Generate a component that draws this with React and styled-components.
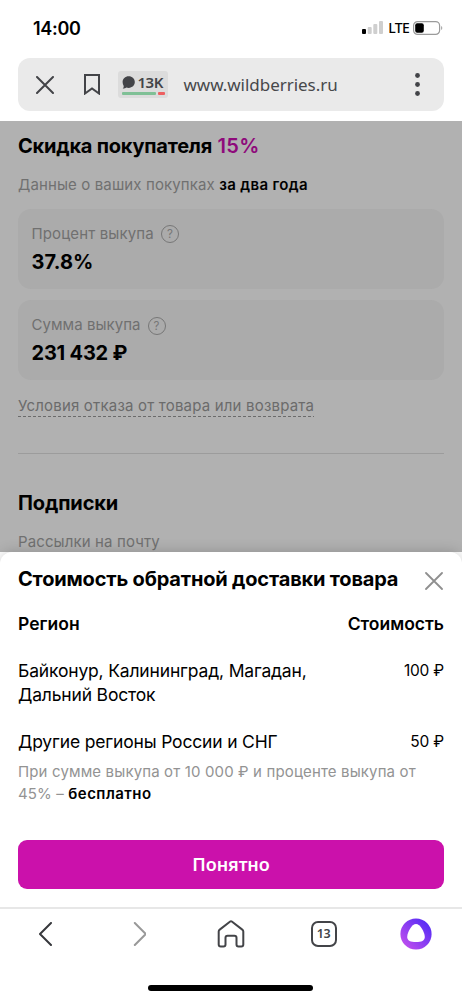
import React from 'react';
import styled, { createGlobalStyle, css } from 'styled-components';

const GlobalStyle = createGlobalStyle`
  * {
    box-sizing: border-box;
  }

  body {
    margin: 0;
    background: #fff;
    color: #000;
    font-family: 'Inter', sans-serif;
  }

  h2, p {
    margin: 0;
  }

  button {
    padding: 0;
    border: none;
    background: none;
    font: inherit;
    cursor: pointer;
  }

  svg {
    display: block;
  }
`;

const Screen = styled.div`
  display: flex;
  flex-direction: column;
  width: 462px;
  height: 1000px;
  overflow: hidden;
`;

const StatusBar = styled.header`
  display: flex;
  align-items: center;
  justify-content: space-between;
  flex: 0 0 58px;
  padding: 0 19px 2px 33px;
`;

const Clock = styled.time`
  font-size: 18px;
  font-weight: 600;
  letter-spacing: -0.3px;
`;

const StatusIcons = styled.div`
  display: flex;
  align-items: center;
  gap: 5px;
  margin-bottom: 1px;
`;

const Network = styled.span`
  margin-right: -1px;
  font: 500 14px/16px 'Noto Sans', sans-serif;
  letter-spacing: -0.7px;
`;

const AddressBar = styled.div`
  display: flex;
  align-items: center;
  flex: 0 0 53px;
  margin: 0 18px 9.5px;
  padding: 0 24px 0 17.5px;
  border-radius: 12px;
  background: #eaeaea;
`;

const Reviews = styled.div`
  display: flex;
  flex-direction: column;
  gap: 1px;
  width: 50px;
  height: 27px;
  margin: 0 16px 0 18px;
  padding: 3px 3px 0 4px;
  border-radius: 3px;
  background: #dcdcdc;
`;

const ReviewsCount = styled.div`
  display: flex;
  align-items: center;
  gap: 3px;
  height: 17px;
  color: #434448;
  font: 600 15px/17px 'Noto Sans', sans-serif;
  letter-spacing: -0.5px;
`;

const Rating = styled.div`
  display: flex;
  gap: 2px;
`;

const RatingPart = styled.i`
  height: 3px;
  border-radius: 1px;
  flex: ${(props) => props.$share} 0 0;
  background: ${(props) => (props.$good ? '#7fc096' : '#ed5f60')};
`;

const Url = styled.span`
  flex: 1;
  padding-top: 1px;
  color: #47484b;
  font: 400 17px/24px 'Noto Sans', sans-serif;
  letter-spacing: -0.04px;
`;

const Page = styled.main`
  flex: 0 0 431.5px;
  padding: 13.5px 18px 0;
  overflow: hidden;
  background: #b1b1b1;
`;

const Title = styled.h2`
  font-size: 20px;
  font-weight: 700;
  line-height: 24px;
  letter-spacing: ${(props) => props.$spacing || 0}px;
`;

const Accent = styled.span`
  margin-left: 0.8px;
  color: #8e0a7b;
  font-weight: 600;
  letter-spacing: 0.4px;
`;

const Text = styled.p`
  color: #707070;
  font-size: 15px;
  line-height: 22px;
  letter-spacing: ${(props) => props.$spacing || 0.14}px;
  white-space: nowrap;

  b {
    color: #000;
    font-weight: 600;
    letter-spacing: 0.36px;
  }
`;

const Caption = styled(Text)`
  margin-top: 15.5px;
  letter-spacing: 0.12px;
`;

const Cards = styled.div`
  display: flex;
  flex-direction: column;
  gap: 11.5px;
  margin: 13px 0 14.5px;
`;

const Card = styled.section`
  height: 80px;
  padding: 14px 13.5px 0;
  border-radius: 13px;
  background: #ababab;
`;

const CardLabel = styled.div`
  display: flex;
  align-items: center;
  gap: 7px;
  margin-bottom: 5px;
`;

const Hint = styled.span`
  width: 18px;
  height: 18px;
  margin-top: 1px;
  border: 1px solid #777;
  border-radius: 50%;
  color: #777;
  font-size: 11.5px;
  line-height: 16px;
  text-align: center;
`;

const TermsLink = styled(Text)`
  width: 296px;
  height: 22.5px;
  color: #6b6b6b;
  letter-spacing: 0.19px;
  background: repeating-linear-gradient(90deg, #6b6b6b 0 3px, transparent 3px 5px) bottom / 100% 1px no-repeat;
`;

const Divider = styled.div`
  height: 1px;
  margin: 36px 0 37px;
  background: #9c9c9c;
`;

const Sheet = styled.section`
  position: relative;
  display: flex;
  flex-direction: column;
  flex: 1;
  padding: 15px 18px 0;
  border-radius: 12px 12px 0 0;
  background: #fff;
  box-shadow: 0 0 14px rgba(0, 0, 0, 0.2);
`;

const SheetHead = styled.div`
  display: flex;
  justify-content: space-between;

  button {
    align-self: flex-end;
    margin: 0 1px 1px 0;
  }
`;

const Row = styled.div`
  display: flex;
  justify-content: space-between;
  margin-top: 23px;
  font-size: 17.5px;
  line-height: 24px;

  ${(props) =>
    props.$head &&
    css`
      margin-top: 21px;
      font-weight: 600;
    `}
`;

const Region = styled.span`
  width: 310px;
  letter-spacing: -0.17px;
`;

const Price = styled.span`
  font-size: 15.5px;
  letter-spacing: -0.2px;
`;

const Note = styled(Text)`
  margin-top: 7px;
  color: #939393;

  b {
    letter-spacing: 0.45px;
  }
`;

const Confirm = styled.button`
  height: 49px;
  margin-top: 35px;
  border-radius: 9px;
  background: #cb11ab;
  color: #fff;
  font: 600 18px/49px 'Noto Sans', sans-serif;
  letter-spacing: -0.1px;
`;

const BottomNav = styled.nav`
  position: relative;
  display: flex;
  justify-content: space-between;
  flex: 0 0 93px;
  padding: 9px 30px 0;
  border-top: 2px solid #e7e7e7;
  background: #fff;
`;

const NavButton = styled.button`
  display: flex;
  align-items: center;
  justify-content: center;
  width: 32px;
  height: 32px;
`;

const Tabs = styled.span`
  width: 26px;
  height: 26px;
  border: 2px solid #434448;
  border-radius: 7px;
  color: #434448;
  font: 600 12.5px/22px 'Noto Sans', sans-serif;
  letter-spacing: -0.3px;
  text-align: center;
`;

const HomeIndicator = styled.div`
  position: absolute;
  left: 148px;
  bottom: 9px;
  width: 165px;
  height: 6px;
  border-radius: 3px;
  background: #000;
`;

const Bookmark = styled.svg`
  margin-left: 30px;
`;

const Signal = () => (
  <svg width="21" height="13" viewBox="0 0 21 13">
    <rect x="0" y="8" width="4" height="5" rx="1" fill="#000" />
    <rect x="5.7" y="6" width="4" height="7" rx="1" fill="#cfcfcf" />
    <rect x="11.3" y="3" width="4" height="10" rx="1" fill="#cfcfcf" />
    <rect x="17" y="0" width="4" height="13" rx="1" fill="#cfcfcf" />
  </svg>
);

const Battery = () => (
  <svg width="30" height="14" viewBox="0 0 30 14">
    <rect x="0.6" y="0.6" width="26" height="12.8" rx="4" fill="none" stroke="#9b9b9b" strokeWidth="1.2" />
    <rect x="2.2" y="2.2" width="8.6" height="9.6" rx="2" fill="#000" />
    <path d="M28.2 5v4c1.4-.5 1.4-3.5 0-4z" fill="#9b9b9b" />
  </svg>
);

const Close = ({ color = '#434448', size = 18, width = 2 }) => (
  <svg width={size} height={size} viewBox="0 0 18 18" stroke={color} strokeWidth={width} strokeLinecap="round">
    <path d="M1 1l16 16M17 1L1 17" />
  </svg>
);

const Chevron = ({ right }) => (
  <svg
    width="14"
    height="24"
    viewBox="0 0 14 24"
    fill="none"
    stroke={right ? '#999' : '#37383c'}
    strokeWidth="2"
    strokeLinecap="round"
    strokeLinejoin="round"
  >
    <path d={right ? 'M2.8 1l11 11-11 11' : 'M12 1l-11 11 11 11'} />
  </svg>
);

const Home = () => (
  <svg width="28" height="28" viewBox="0 0 28 28" fill="none" stroke="#434448" strokeWidth="2" strokeLinejoin="round">
    <path d="M1.7 11.500c0-.9.3-1.400 1-1.900L13.200 1.500c.6-.4 1-.4 1.600 0l10.500 8.100c.7.500 1 1 1 1.900v13c0 1.400-.6 2-2 2h-2.800c-1.400 0-2-.6-2-2v-6.700c0-1.400-.7-2.100-2.100-2.100h-6.800c-1.400 0-2.100.7-2.100 2.100v6.700c0 1.400-.6 2-2 2H3.700c-1.400 0-2-.6-2-2z" />
  </svg>
);

const Alice = () => (
  <svg width="32" height="32" viewBox="0 0 32 32">
    <defs>
      <linearGradient id="alice" x1="0" y1="1" x2="1" y2="0">
        <stop offset="0.1" stopColor="#c04fee" />
        <stop offset="0.85" stopColor="#5a2df5" />
      </linearGradient>
    </defs>
    <circle cx="16" cy="16" r="15.6" fill="url(#alice)" />
    <path
      d="M16 6c4.100 0 8.800 8.200 8.800 13 0 3.700-3.300 5-8.800 5s-8.800-1.300-8.800-5c0-4.800 4.700-13 8.800-13z"
      fill="#fff"
    />
  </svg>
);

const cards = [
  { label: 'Процент выкупа', value: '37.8%', spacing: 0.1 },
  { label: 'Сумма выкупа', value: '231 432 ₽', labelSpacing: 0.05, spacing: -0.2 },
];

export default function App() {
  return (
    <Screen>
      <GlobalStyle />
      <StatusBar>
        <Clock>14:00</Clock>
        <StatusIcons>
          <Signal />
          <Network>LTE</Network>
          <Battery />
        </StatusIcons>
      </StatusBar>

      <AddressBar>
        <Close />
        <Bookmark width="16" height="21" viewBox="0 0 16 21" fill="none" stroke="#434448" strokeWidth="2">
          <path d="M1 1h14v18.5l-7-5-7 5z" />
        </Bookmark>
        <Reviews>
          <ReviewsCount>
            <svg width="13" height="13" viewBox="0 0 13 13" fill="#434448">
              <path d="M6.700.3c3.500 0 6.100 2.500 6.100 5.800s-2.600 5.800-6.100 5.800c-.9 0-1.700-.1-2.400-.4-.9.700-2.200 1.200-3.600 1.100.8-.9 1-1.700 1-2.700C1 8.900.6 7.600.6 6.100.6 2.800 3.200.3 6.700.3z" />
            </svg>
            13K
          </ReviewsCount>
          <Rating>
            <RatingPart $good $share={34} />
            <RatingPart $share={7} />
          </Rating>
        </Reviews>
        <Url>www.wildberries.ru</Url>
        <svg width="5" height="23" viewBox="0 0 5 23" fill="#434448">
          <circle cx="2.5" cy="2.5" r="2.4" />
          <circle cx="2.5" cy="11.5" r="2.4" />
          <circle cx="2.5" cy="20.5" r="2.4" />
        </svg>
      </AddressBar>

      <Page>
        <Title $spacing={-0.22}>
          Скидка покупателя <Accent>15%</Accent>
        </Title>
        <Caption>
          Данные о ваших покупках <b>за два года</b>
        </Caption>
        <Cards>
          {cards.map((card) => (
            <Card key={card.label}>
              <CardLabel>
                <Text $spacing={card.labelSpacing}>{card.label}</Text>
                <Hint>?</Hint>
              </CardLabel>
              <Title $spacing={card.spacing}>{card.value}</Title>
            </Card>
          ))}
        </Cards>
        <TermsLink>Условия отказа от товара или возврата</TermsLink>
        <Divider />
        <Title $spacing={-0.12}>Подписки</Title>
        <Caption>Рассылки на почту</Caption>
      </Page>

      <Sheet>
        <SheetHead>
          <Title $spacing={-0.18}>Стоимость обратной доставки товара</Title>
          <button aria-label="Закрыть">
            <Close color="#8f8f8f" width={1.8} />
          </button>
        </SheetHead>
        <Row $head>
          <span>Регион</span>
          <span>Стоимость</span>
        </Row>
        <Row>
          <Region>Байконур, Калининград, Магадан, Дальний Восток</Region>
          <Price>100 ₽</Price>
        </Row>
        <Row>
          <Region>Другие регионы России и СНГ</Region>
          <Price>50 ₽</Price>
        </Row>
        <Note>
          При сумме выкупа от 10 000 ₽ и проценте выкупа от
          <br />
          45% – <b>бесплатно</b>
        </Note>
        <Confirm>Понятно</Confirm>
      </Sheet>

      <BottomNav>
        <NavButton>
          <Chevron />
        </NavButton>
        <NavButton>
          <Chevron right />
        </NavButton>
        <NavButton>
          <Home />
        </NavButton>
        <NavButton>
          <Tabs>13</Tabs>
        </NavButton>
        <NavButton>
          <Alice />
        </NavButton>
        <HomeIndicator />
      </BottomNav>
    </Screen>
  );
}
